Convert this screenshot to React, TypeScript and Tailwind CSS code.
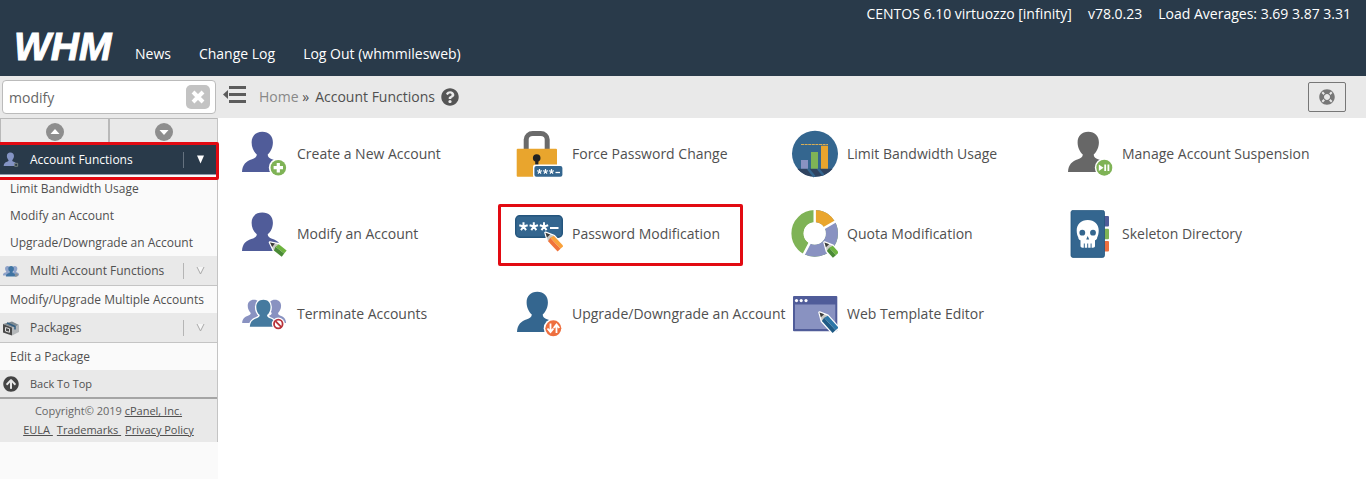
import { useState } from 'react';
import type { ReactNode } from 'react';
import { FaArrowCircleUp, FaLifeRing, FaQuestionCircle } from 'react-icons/fa';

const PERSON =
  'M22.3 1.7c6.6 0 10.6 4.2 10.6 10.6 0 5.2-2.2 9.6-5.2 12.2 0 2.6 1.8 3.8 4.3 4.8 6 2.2 9 5 9.5 12.7H2c.5-7.7 4-10.5 10-12.7 2.500-1 4.800-2.200 4.800-4.800-3-2.600-5.200-7-5.200-12.200 0-6.400 4.100-10.600 10.700-10.600z';

function Icon({ children }: { children: ReactNode }) {
  return (
    <svg viewBox="0 0 48 48" className="w-12 h-12 shrink-0" aria-hidden="true">
      {children}
    </svg>
  );
}

function Pencil({ x, y, angle, length, light, dark }: { x: number; y: number; angle: number; length: number; light: string; dark: string }) {
  return (
    <g transform={`translate(${x} ${y}) rotate(${angle})`}>
      <path d={`M0 0L8-4H${length}V4H8z`} fill="#fff" stroke="#fff" strokeWidth="2.5" strokeLinejoin="round" />
      <path d="M0 0L8-4V4z" fill="#c9c9c4" />
      <path d="M0 0L4.500-2.200V2.200z" fill="#3b3b3b" />
      <path d={`M8-4H${length}V0H7z`} fill={light} />
      <path d={`M7 0H${length}V4H8z`} fill={dark} />
    </g>
  );
}

function Stars({ xs, y, r, width }: { xs: number[]; y: number; r: number; width: number }) {
  return (
    <g stroke="#fff" strokeWidth={width}>
      {xs.map((x) => (
        <path
          key={x}
          d={`M${x} ${y}V${y - r}M${x} ${y}l${r} ${-r * 0.3}M${x} ${y}l${-r} ${-r * 0.3}M${x} ${y}l${r * 0.6} ${r * 0.85}M${x} ${y}l${-r * 0.6} ${r * 0.85}`}
        />
      ))}
    </g>
  );
}

function CreateIcon() {
  return (
    <Icon>
      <path d={PERSON} fill="#505c99" />
      <circle cx="38.300" cy="37.700" r="9.500" fill="#fff" />
      <circle cx="38.300" cy="37.700" r="7.800" fill="#7fb356" />
      <path d="M38.300 33v9.400M33.600 37.700h9.400" stroke="#fff" strokeWidth="3.200" />
    </Icon>
  );
}

function ModifyIcon() {
  return (
    <Icon>
      <path d={PERSON} fill="#505c99" transform="translate(0 1) scale(1 .95)" />
      <Pencil x={30} y={32.5} angle={38} length={18} light="#6db33f" dark="#4a8a35" />
    </Icon>
  );
}

function TerminateIcon() {
  return (
    <Icon>
      <path d={PERSON} fill="#8992c1" transform="translate(1 8.700) scale(.58)" />
      <path d={PERSON} fill="#8992c1" transform="translate(22 8.700) scale(.58)" />
      <path d={PERSON} fill="#457a9f" stroke="#fff" strokeWidth="4" paintOrder="stroke" transform="translate(8.500 8.700) scale(.67)" />
      <circle cx="38.300" cy="34" r="6.500" fill="#fff" />
      <circle cx="38.300" cy="34" r="4.300" fill="#fff" stroke="#b8323a" strokeWidth="1.800" />
      <path d="M35.500 31.200l5.600 5.600" stroke="#b8323a" strokeWidth="1.800" />
    </Icon>
  );
}

function LockIcon() {
  return (
    <Icon>
      <path d="M11.200 19V9.500a6.500 6 0 0 1 6.500-6h8a6.500 6 0 0 1 6.500 6V19" fill="none" stroke="#6a6a6a" strokeWidth="5" />
      <rect x="1.700" y="18.700" width="40.300" height="28" rx="1" fill="#e9a52d" />
      <circle cx="21.700" cy="28" r="3.800" fill="#222" />
      <path d="M20.200 28h3.200v8h-3.200z" fill="#222" />
      <rect x="18" y="34.500" width="31" height="13.500" rx="2.500" fill="#fff" />
      <rect x="19.400" y="36" width="28" height="10.800" rx="2" fill="#34668f" />
      <Stars xs={[24.5, 30.5, 36.5]} y={41.5} r={2.5} width={1.2} />
      <path d="M40.500 42.500h4.500" stroke="#fff" strokeWidth="1.300" />
    </Icon>
  );
}

function PasswordIcon() {
  return (
    <Icon>
      <rect x=".7" y="5.700" width="46.600" height="21.600" rx="4" fill="#34668f" stroke="#24557d" strokeWidth="1.400" />
      <Stars xs={[8.5, 18.8, 29]} y={16.5} r={4.2} width={2} />
      <path d="M35 18h8.500" stroke="#fff" strokeWidth="2" />
      <Pencil x={30.5} y={22.7} angle={47} length={22} light="#f9a13a" dark="#f0733a" />
    </Icon>
  );
}

function UpgradeIcon() {
  return (
    <Icon>
      <path d={PERSON} fill="#34668f" />
      <circle cx="38.300" cy="38.300" r="9.600" fill="#fff" />
      <circle cx="38.300" cy="38.300" r="8" fill="#ee6f3f" />
      <path d="M35.500 33.500v8M32.500 38.500l3 3.500 3-3.500M41.500 43v-8M38.700 38l2.800-3.500 2.800 3.500" fill="none" stroke="#fff" strokeWidth="1.800" />
    </Icon>
  );
}

function BandwidthIcon() {
  return (
    <Icon>
      <circle cx="25" cy="23.800" r="23" fill="#34668f" />
      <path d="M7.300 38.700h35.400A23 23 0 0 1 25 46.800 23 23 0 0 1 7.300 38.700z" fill="#2f4360" />
      <path d="M18 38.700l6.500 8M28 38.700l5.500 6.500" stroke="#34668f" strokeWidth="2.500" />
      <path d="M11 30h7v8.700h-7z" fill="#8992c1" />
      <path d="M21 22h7v16.700h-7z" fill="#7fb356" />
      <path d="M31 15.700h7v23h-7z" fill="#e9a52d" />
      <path d="M11 14.500h27" stroke="#d9ae55" strokeWidth="1.200" strokeDasharray="3 .6" />
    </Icon>
  );
}

function QuotaIcon() {
  return (
    <Icon>
      <g fill="none" strokeWidth="12.200" transform="rotate(-90 24.700 23.400)">
        <circle cx="24.700" cy="23.400" r="17.200" stroke="#7fb356" />
        <circle cx="24.700" cy="23.400" r="17.200" stroke="#8992c1" pathLength="360" strokeDasharray="208 152" />
        <circle cx="24.700" cy="23.400" r="17.200" stroke="#e9a52d" pathLength="360" strokeDasharray="60 300" />
      </g>
      <path d="M24.700 23.400V-1M24.700 23.400l22-12.700M24.700 23.400l-12 23" stroke="#fff" strokeWidth="2.400" />
      <circle cx="24.700" cy="23.400" r="11" fill="#fff" />
      <Pencil x={34.5} y={32.5} angle={48} length={17} light="#6db33f" dark="#4a8a35" />
    </Icon>
  );
}

function TemplateIcon() {
  return (
    <Icon>
      <rect x="3" y="6" width="44.300" height="35.300" rx="1" fill="#505c99" />
      <path d="M5 14.500h40.300v24.500H5z" fill="#8992c1" />
      <g fill="#fff">
        <circle cx="6.500" cy="10.600" r="1.600" />
        <circle cx="11.200" cy="10.600" r="1.600" />
        <circle cx="16" cy="10.600" r="1.600" />
      </g>
      <Pencil x={29.5} y={22.5} angle={48} length={24} light="#2d77a8" dark="#1f5a85" />
    </Icon>
  );
}

function SuspendIcon() {
  return (
    <Icon>
      <path d={PERSON} fill="#676767" transform="translate(1 0)" />
      <circle cx="39.300" cy="37.700" r="9.500" fill="#fff" />
      <circle cx="39.300" cy="37.700" r="8" fill="#7fb356" />
      <path d="M33.800 34.500l4.700 3.200-4.700 3.200z" fill="#fff" />
      <path d="M40.200 34.500v6.400M43.400 34.500v6.400" stroke="#fff" strokeWidth="1.800" />
    </Icon>
  );
}

function SkeletonIcon() {
  return (
    <Icon>
      <rect x="38" y="6" width="6" height="10.500" rx="1" fill="#505c99" />
      <rect x="38" y="18.700" width="6" height="10.500" rx="1" fill="#7fb356" />
      <rect x="38" y="31" width="6" height="10.500" rx="1" fill="#ee6f3f" />
      <rect x="6" y=".4" width="33.500" height="47" rx="2" fill="#34668f" stroke="#24557d" strokeWidth=".8" />
      <path d="M22.700 10c6.800 0 11 4.500 11 10.500 0 3-.7 5.300-1.500 7 0 1.500-1 2.500-2.200 2.800V36c0 1.200-1 1.700-2 1.700H17.500c-1 0-2-.5-2-1.700v-5.700c-1.300-.3-2.200-1.300-2.200-2.800-.9-1.700-1.600-4-1.600-7C11.700 14.500 16 10 22.700 10z" fill="#fff" />
      <g fill="#34668f">
        <circle cx="17.300" cy="22.700" r="2.900" />
        <circle cx="28" cy="22.700" r="2.900" />
        <path d="M22.700 26l1.500 3.500h-3z" />
      </g>
      <path d="M19.300 33.500v4.500M22.700 33.500v4.500M26.100 33.500v4.500" stroke="#34668f" strokeWidth="1" />
    </Icon>
  );
}

const features = [
  { name: 'Create a New Account', icon: <CreateIcon /> },
  { name: 'Force Password Change', icon: <LockIcon /> },
  { name: 'Limit Bandwidth Usage', icon: <BandwidthIcon /> },
  { name: 'Manage Account Suspension', icon: <SuspendIcon /> },
  { name: 'Modify an Account', icon: <ModifyIcon /> },
  { name: 'Password Modification', icon: <PasswordIcon />, marked: true },
  { name: 'Quota Modification', icon: <QuotaIcon /> },
  { name: 'Skeleton Directory', icon: <SkeletonIcon /> },
  { name: 'Terminate Accounts', icon: <TerminateIcon /> },
  { name: 'Upgrade/Downgrade an Account', icon: <UpgradeIcon /> },
  { name: 'Web Template Editor', icon: <TemplateIcon /> },
];

const sections = [
  {
    title: 'Account Functions',
    active: true,
    items: ['Limit Bandwidth Usage', 'Modify an Account', 'Upgrade/Downgrade an Account'],
    icon: (
      <svg viewBox="0 0 48 48" className="w-4 h-4">
        <path d={PERSON} fill="#8494c4" />
        <path d="M35 34h9v9h-9z" fill="#293a4a" stroke="#75807f" strokeWidth="3" />
      </svg>
    ),
  },
  {
    title: 'Multi Account Functions',
    items: ['Modify/Upgrade Multiple Accounts'],
    icon: (
      <svg viewBox="0 0 48 48" className="w-4 h-4">
        <path d={PERSON} fill="#8fa3c9" transform="translate(-2 8) scale(.7)" />
        <path d={PERSON} fill="#8fa3c9" transform="translate(20 8) scale(.7)" />
        <path d={PERSON} fill="#3f74a3" transform="translate(7 8) scale(.78)" />
        <circle cx="40" cy="36" r="5" fill="#8a9199" />
      </svg>
    ),
  },
  {
    title: 'Packages',
    items: ['Edit a Package'],
    icon: (
      <svg viewBox="0 0 16 16" className="w-4 h-4">
        <path d="M0 4l9-2.500 7 3.500-6 2.500z" fill="#7f8a91" />
        <path d="M9 7.500L16 5v7l-7 3.500z" fill="#b4b7b9" />
        <path d="M0 4l9 3.500v8L0 12.500z" fill="#4a4a4a" />
        <path d="M4 2.900l8 3.700v3" fill="none" stroke="#2f5d82" strokeWidth="1.500" />
        <path d="M2.500 7.500l4 1.200v3.600l-4-1.200z" fill="none" stroke="#ddd" />
      </svg>
    ),
  },
];

function Arrow({ down }: { down?: boolean }) {
  return (
    <svg viewBox="0 0 18 18" className="w-[18px] h-[18px]" aria-hidden="true">
      <circle cx="9" cy="9" r="9" fill="#8e8e8e" />
      <path d={down ? 'M4.500 7h9L9 12z' : 'M4.500 11h9L9 6z'} fill="#fff" />
    </svg>
  );
}

function Sidebar() {
  const [query, setQuery] = useState('modify');

  return (
    <aside className="w-[218px] shrink-0 bg-[#fafafa] text-[12px] text-[#505050]">
      <div className="bg-[#e9e9e9] h-[42px] px-0.5 pt-1">
        <div className="flex items-center h-[34px] bg-white border border-[#bbb] rounded-sm pl-1.5 pr-[5px]">
          <input
            type="text"
            aria-label="Search"
            value={query}
            onChange={(e) => setQuery(e.target.value)}
            className="flex-1 min-w-0 text-[14px] text-[#666] outline-none"
          />
          <button type="button" aria-label="Clear search" onClick={() => setQuery('')} className="w-6 h-6 rounded-[5px] bg-[#c3c3c3] flex items-center justify-center">
            <svg viewBox="0 0 14 14" className="w-3.5 h-3.5">
              <path d="M2 2l10 10M12 2L2 12" stroke="#fff" strokeWidth="4" />
            </svg>
          </button>
        </div>
      </div>
      <div className="relative border-r border-[#c4c4c4]">
        <div className="flex h-[27px] bg-[#e9e9e9] border-t border-l border-[#b9b9b9]">
          <button type="button" aria-label="Previous" className="flex-1 flex items-center justify-center border-r-2 border-[#b9b9b9]">
            <Arrow />
          </button>
          <button type="button" aria-label="Next" className="flex-1 flex items-center justify-center">
            <Arrow down />
          </button>
        </div>
        {sections.map((section) => (
          <section key={section.title}>
            <div className={`flex items-center h-[30px] pl-[3px] pr-3 border-b ${section.active ? 'bg-[#293a4a] text-white border-[#8f9aad]' : 'bg-[#e9e9e9] border-[#c4c4c4]'}`}>
              <span className="w-[27px]">{section.icon}</span>
              <a href="#" className="flex-1">{section.title}</a>
              <button type="button" aria-label={`Toggle ${section.title}`} className={`flex items-center h-4 pl-3 border-l ${section.active ? 'border-[#65727f]' : 'border-[#b5b5b5]'}`}>
                <svg viewBox="0 0 9 9" className="w-[9px] h-[9px]">
                  {section.active
                    ? <path d="M1 .5h7L4.500 8.500z" fill="#fff" />
                    : <path d="M1 1l3.500 7L8 1" fill="#f6f6f6" stroke="#a9a9a9" />}
                </svg>
              </button>
            </div>
            <ul className="bg-[#fafafa]">
              {section.items.map((item) => (
                <li key={item} className="h-[27px] leading-[27px] pl-2.5 whitespace-nowrap">
                  <a href="#">{item}</a>
                </li>
              ))}
            </ul>
          </section>
        ))}
        <a href="#" className="flex items-center h-[29px] pl-[3px] pt-px bg-[#e9e9e9] border-b-2 border-[#a5a5a5] text-[11px]">
          <span className="w-[27px]"><FaArrowCircleUp className="w-4 h-4 text-[#444]" /></span>
          Back To Top
        </a>
        <footer className="h-[43px] pt-0.5 bg-[#e9e9e9] text-[11px] leading-[19px] text-center text-[#666]">
          <p>Copyright© 2019 <a href="#" className="underline text-[#505050]">cPanel, Inc.</a></p>
          <p className="flex justify-center gap-1 text-[#505050]">
            <a href="#" className="underline whitespace-pre">EULA </a>
            <a href="#" className="underline whitespace-pre">Trademarks </a>
            <a href="#" className="underline">Privacy Policy</a>
          </p>
        </footer>
        <div className="absolute -left-1 -right-0.5 top-6 h-[38px] border-3 border-[#e20a12] rounded-xs pointer-events-none" />
      </div>
    </aside>
  );
}

export default function App() {
  return (
    <div className="min-h-screen flex flex-col bg-white font-['Open_Sans',sans-serif] text-[14px] text-[#505050]">
      <header className="bg-[#293a4a] text-white h-[76px] flex justify-between">
        <div className="flex items-end pb-3">
          <a href="#" className="ml-3.5 w-[100px] h-[33px] leading-[32px] text-[39px] font-bold italic font-['Liberation_Sans',sans-serif] [-webkit-text-stroke:1px_white]">WHM</a>
          <nav className="flex gap-7 ml-[21px]">
            <a href="#">News</a>
            <a href="#">Change Log</a>
            <a href="#">Log Out (whmmilesweb)</a>
          </nav>
        </div>
        <div className="flex gap-4 pt-[3px] pr-[15px]">
          <span>CENTOS 6.10 virtuozzo [infinity]</span>
          <span>v78.0.23</span>
          <span>Load Averages: 3.69 3.87 3.31</span>
        </div>
      </header>

      <div className="flex flex-1">
        <Sidebar />
        <main className="flex-1">
          <div className="flex items-center h-[42px] bg-[#e9e9e9] pl-[5px] pr-5">
            <button type="button" aria-label="Collapse menu" className="mr-3 mb-1.5">
              <svg viewBox="0 0 24 20" className="w-6 h-5">
                <path d="M6 3.500h17M6 10.500h17M6 17.500h17" stroke="#5c5c5c" strokeWidth="3" />
                <path d="M5 6v9L0 10.500z" fill="#5c5c5c" />
              </svg>
            </button>
            <nav className="flex items-center gap-1.5" aria-label="Breadcrumb">
              <span className="pb-0.5"><a href="#" className="text-[#888]">Home</a> »</span>
              <span className="pb-0.5">Account Functions</span>
              <FaQuestionCircle className="w-[18px] h-[18px] text-[#555]" />
            </nav>
            <button type="button" aria-label="Support" className="ml-auto w-[38px] h-[30px] border border-[#777] rounded-xs flex items-center justify-center">
              <FaLifeRing className="w-4 h-4 text-[#777]" />
            </button>
          </div>
          <ul className="grid grid-cols-4 gap-y-8 pl-[22px] pr-[26px] pt-3">
            {features.map((feature) => (
              <li key={feature.name} className="relative">
                <a href="#" className="flex items-center gap-[9px] whitespace-nowrap">
                  {feature.icon}
                  <span className="pb-0.5">{feature.name}</span>
                </a>
                {feature.marked && (
                  <div className="absolute -left-[17px] -top-1.5 w-[245px] h-[62px] border-3 border-[#e20a12] rounded-xs pointer-events-none" />
                )}
              </li>
            ))}
          </ul>
        </main>
      </div>
    </div>
  );
}
